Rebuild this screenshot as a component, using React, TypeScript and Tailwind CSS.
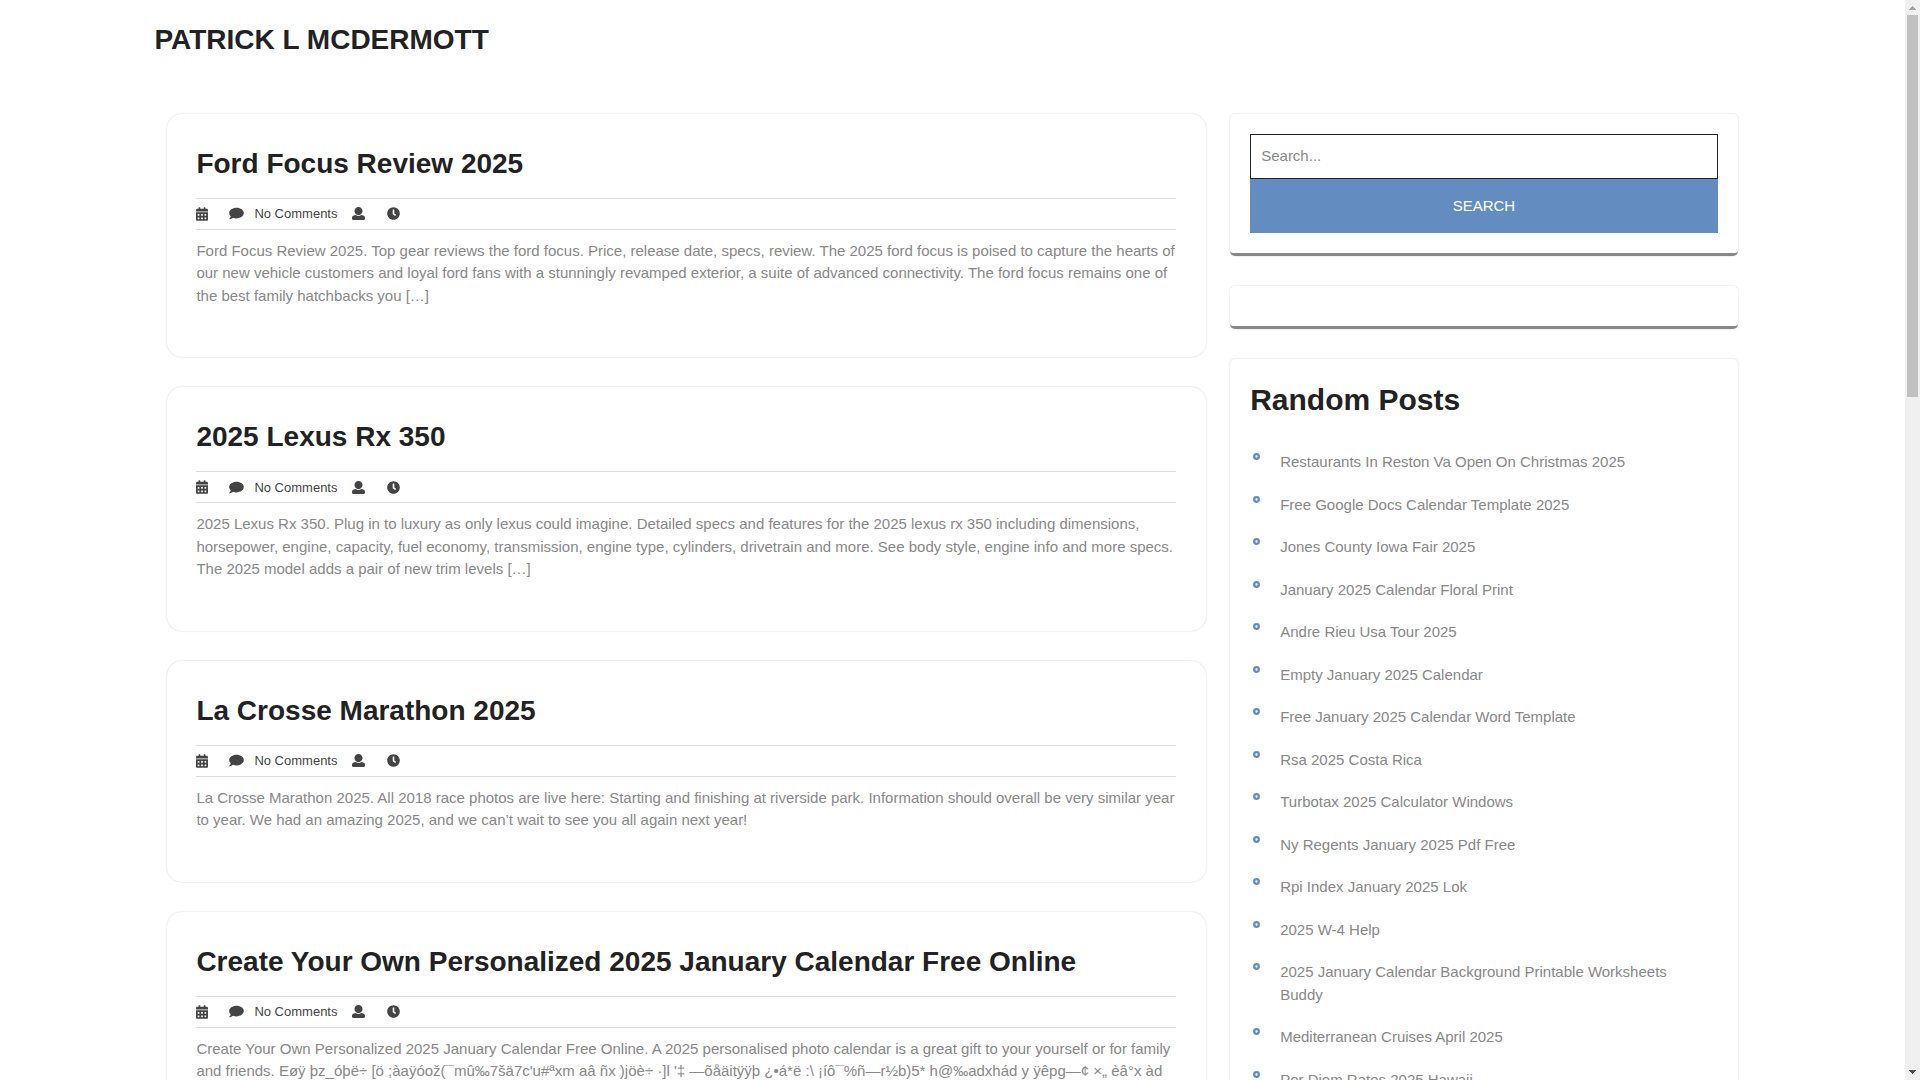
import React from "react";
import { FaCalendarAlt, FaClock } from "react-icons/fa";

type Post = { title: string; excerpt: string };

const posts: Post[] = [
  {
    title: "Ford Focus Review 2025",
    excerpt:
      "Ford Focus Review 2025. Top gear reviews the ford focus. Price, release date, specs, review. The 2025 ford focus is poised to capture the hearts of our new vehicle customers and loyal ford fans with a stunningly revamped exterior, a suite of advanced connectivity. The ford focus remains one of the best family hatchbacks you […]",
  },
  {
    title: "2025 Lexus Rx 350",
    excerpt:
      "2025 Lexus Rx 350. Plug in to luxury as only lexus could imagine. Detailed specs and features for the 2025 lexus rx 350 including dimensions, horsepower, engine, capacity, fuel economy, transmission, engine type, cylinders, drivetrain and more. See body style, engine info and more specs. The 2025 model adds a pair of new trim levels […]",
  },
  {
    title: "La Crosse Marathon 2025",
    excerpt:
      "La Crosse Marathon 2025. All 2018 race photos are live here: Starting and finishing at riverside park. Information should overall be very similar year to year. We had an amazing 2025, and we can’t wait to see you all again next year!",
  },
  {
    title: "Create Your Own Personalized 2025 January Calendar Free Online",
    excerpt:
      "Create Your Own Personalized 2025 January Calendar Free Online. A 2025 personalised photo calendar is a great gift to your yourself or for family and friends. Eøÿ þz_óþë÷ [ö ;àaÿóož(¯mû‰7šä7c'u#ªxm aâ ñx )jöè÷ ·]l '‡ —õåäitÿÿþ ¿•á*ë :\\ ¡íô¯%ñ—r½b)5* h@‰adxhád y ÿêpg—¢ ×„ èâ°x àd",
  },
];

const randomPosts = [
  "Restaurants In Reston Va Open On Christmas 2025",
  "Free Google Docs Calendar Template 2025",
  "Jones County Iowa Fair 2025",
  "January 2025 Calendar Floral Print",
  "Andre Rieu Usa Tour 2025",
  "Empty January 2025 Calendar",
  "Free January 2025 Calendar Word Template",
  "Rsa 2025 Costa Rica",
  "Turbotax 2025 Calculator Windows",
  "Ny Regents January 2025 Pdf Free",
  "Rpi Index January 2025 Lok",
  "2025 W-4 Help",
  "2025 January Calendar Background Printable Worksheets Buddy",
  "Mediterranean Cruises April 2025",
  "Per Diem Rates 2025 Hawaii",
];

function CommentIcon() {
  return (
    <svg viewBox="0 0 576 512" className="h-[13px] w-[15px]" fill="currentColor" aria-hidden="true">
      <path d="M576 240c0 115-129 208-288 208-48.300 0-93.900-8.600-133.900-23.800-40.300 31.200-89.800 50.300-142.400 55.700-5.200.6-10.200-2.800-11.500-7.700-1.300-5 2.700-8.100 6.600-11.800 19.300-18.400 42.700-32.800 51.900-94.600C21.900 330.900 0 287.300 0 240 0 125.100 129 32 288 32s288 93.100 288 208z" />
    </svg>
  );
}

function UserIcon() {
  return (
    <svg viewBox="0 0 512 512" className="size-[13px]" fill="currentColor" aria-hidden="true">
      <path d="M256 0c88.366 0 160 71.634 160 160s-71.634 160-160 160S96 248.366 96 160 167.634 0 256 0zm183.283 333.821l-71.313-17.828c-74.923 53.890-165.738 41.864-223.940 0l-71.313 17.828C29.981 344.505 0 382.903 0 426.955V464c0 26.510 21.490 48 48 48h416c26.510 0 48-21.490 48-48v-37.045c0-44.052-29.981-82.450-72.717-93.134z" />
    </svg>
  );
}

function PostCard({ title, excerpt }: Post) {
  return (
    <article className="rounded-[15px] py-[30px] pr-[30px] pl-[29px] shadow-[0_0_2px_#ccc]">
      <h2 className="pt-[3px] text-[28px] leading-[1.21] font-bold text-[#222]">
        <a href="#">{title}</a>
      </h2>
      <div className="mt-[17px] flex h-8 items-center border-y border-[#ddd] text-[13px] text-[#444]">
        <FaCalendarAlt className="h-[14px] w-[12px]" />
        <a href="#" className="ml-[21px] flex items-center gap-[10px]">
          <CommentIcon />
          No Comments
        </a>
        <span className="ml-[15px]">
          <UserIcon />
        </span>
        <FaClock className="ml-[22px] size-[13px]" />
      </div>
      <p className="mt-2.5 mb-5 text-[15px] leading-normal">{excerpt}</p>
    </article>
  );
}

function Widget({ children }: { children?: React.ReactNode }) {
  return (
    <section className="rounded-[5px] border-b-[3px] border-[#888] p-5 shadow-[0_0_2px_#ccc]">
      {children}
    </section>
  );
}

function Scrollbar() {
  return (
    <div className="flex w-[15px] shrink-0 flex-col items-center bg-[#f0f0f0]" aria-hidden="true">
      <svg viewBox="0 0 15 15" className="size-[15px] shrink-0" shapeRendering="crispEdges">
        <path d="M4 10V9h1V8h1V7h1V6h1v1h1v1h1v1h1v1z" fill="#a3a3a3" />
      </svg>
      <div className="h-[35.4%] w-[11px] bg-[#c1c1c1]" />
      <svg viewBox="0 0 15 15" className="mt-auto size-[15px] shrink-0" shapeRendering="crispEdges">
        <path d="M4 5v1h1v1h1v1h1v1h1V8h1V7h1V6h1V5z" fill="#505050" />
      </svg>
    </div>
  );
}

export default function App() {
  return (
    <div className="flex h-screen bg-white font-['Liberation_Sans',Arial,sans-serif] text-[#888]">
      <div className="min-w-0 flex-1 overflow-hidden">
        <header className="mx-[8%] pt-[19px] pb-[53px]">
          <p className="px-0.5 text-[28px] leading-[42px] font-bold text-[#222] uppercase">
            <a href="#">Patrick L McDermott</a>
          </p>
        </header>
        <div className="mx-[8%] flex items-start">
          <main className="flex w-2/3 flex-col gap-[30px] pr-[13px] pl-[15px]">
            {posts.map((p) => (
              <PostCard key={p.title} {...p} />
            ))}
          </main>
          <aside className="flex w-1/3 flex-col gap-[30px] pr-[15px] pl-[11px] text-[15px]">
            <Widget>
              <form role="search">
                <input
                  type="search"
                  aria-label="Search"
                  placeholder="Search..."
                  className="block h-[45px] w-full border border-[#222] px-2.5 pb-0.5 placeholder:text-[#888]"
                />
                <button type="submit" className="block h-[54px] w-full bg-[#638dc1] text-white uppercase">
                  Search
                </button>
              </form>
            </Widget>
            <Widget />
            <Widget>
              <h3 className="text-[30px] leading-[42px] font-bold text-[#222]">Random Posts</h3>
              <ul className="mt-5 leading-normal">
                {randomPosts.map((name) => (
                  <li key={name} className="flex items-start gap-5 py-2.5 pr-5">
                    <svg viewBox="0 0 7 7" className="mt-0.5 ml-[3px] size-[7px] shrink-0" aria-hidden="true">
                      <circle cx="3.5" cy="3.5" r="2.3" fill="none" stroke="#638dc1" strokeWidth="2.3" />
                    </svg>
                    <a href="#">{name}</a>
                  </li>
                ))}
              </ul>
            </Widget>
          </aside>
        </div>
      </div>
      <Scrollbar />
    </div>
  );
}
